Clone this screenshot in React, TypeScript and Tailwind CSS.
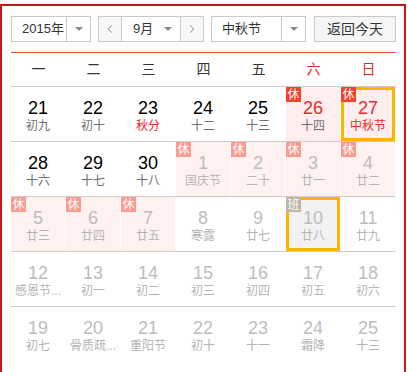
import { ChevronLeft, ChevronRight } from 'lucide-react';

type Day = {
  d: number;
  lunar: string;
  other?: boolean;   // next month, faded
  rest?: boolean;    // 休
  work?: boolean;    // 班
  red?: boolean;
  lunarRed?: boolean;
  selected?: boolean;
};

const weekdays = ['一', '二', '三', '四', '五', '六', '日'];

const rows: Day[][] = [
  [
    { d: 21, lunar: '初九' },
    { d: 22, lunar: '初十' },
    { d: 23, lunar: '秋分', lunarRed: true },
    { d: 24, lunar: '十二' },
    { d: 25, lunar: '十三' },
    { d: 26, lunar: '十四', rest: true, red: true },
    { d: 27, lunar: '中秋节', rest: true, red: true, lunarRed: true, selected: true },
  ],
  [
    { d: 28, lunar: '十六' },
    { d: 29, lunar: '十七' },
    { d: 30, lunar: '十八' },
    { d: 1, lunar: '国庆节', other: true, rest: true },
    { d: 2, lunar: '二十', other: true, rest: true },
    { d: 3, lunar: '廿一', other: true, rest: true },
    { d: 4, lunar: '廿二', other: true, rest: true },
  ],
  [
    { d: 5, lunar: '廿三', other: true, rest: true },
    { d: 6, lunar: '廿四', other: true, rest: true },
    { d: 7, lunar: '廿五', other: true, rest: true },
    { d: 8, lunar: '寒露', other: true },
    { d: 9, lunar: '廿七', other: true },
    { d: 10, lunar: '廿八', other: true, work: true },
    { d: 11, lunar: '廿九', other: true },
  ],
  [
    { d: 12, lunar: '感恩节...', other: true },
    { d: 13, lunar: '初一', other: true },
    { d: 14, lunar: '初二', other: true },
    { d: 15, lunar: '初三', other: true },
    { d: 16, lunar: '初四', other: true },
    { d: 17, lunar: '初五', other: true },
    { d: 18, lunar: '初六', other: true },
  ],
  [
    { d: 19, lunar: '初七', other: true },
    { d: 20, lunar: '骨质疏...', other: true },
    { d: 21, lunar: '重阳节', other: true },
    { d: 22, lunar: '初十', other: true },
    { d: 23, lunar: '十一', other: true },
    { d: 24, lunar: '霜降', other: true },
    { d: 25, lunar: '十三', other: true },
  ],
];

function Caret() {
  return <span className="w-0 h-0 border-x-[4px] border-x-transparent border-t-[4px] border-t-[#8a8a8a]" />;
}

function Cell({ day }: { day: Day }) {
  const boxed = day.selected || day.work;
  const bg = day.work ? 'bg-[#f2f2f2]' : day.rest ? (day.other ? 'bg-[#fff1f0]' : 'bg-[#ffeeee]') : '';
  const numColor = day.other ? 'text-[#bdbdbd]' : day.red ? 'text-[#e42a2a]' : 'text-black';
  const lunarColor = day.other ? 'text-[#b5b5b5]' : day.lunarRed ? 'text-[#e42a2a]' : 'text-[#6e6e6e]';

  return (
    <div
      className={`relative mr-px h-[54px] flex flex-col items-center ${bg} ${
        boxed ? 'border-[3px] border-[#ffb500] pt-[8px]' : 'pt-[11px]'
      }`}
    >
      {day.rest && (
        <span
          className={`absolute ${boxed ? '-left-[3px] -top-[3px]' : 'left-0 top-0'} w-[15px] h-[15px] flex items-center justify-center text-[12px] leading-none text-white ${
            day.other ? 'bg-[#fa9b92]' : 'bg-[#f5402f]'
          }`}
        >
          休
        </span>
      )}
      {day.work && (
        <span className="absolute -left-[3px] -top-[3px] w-[15px] h-[15px] flex items-center justify-center text-[12px] leading-none text-white bg-[#bdb5a6]">
          班
        </span>
      )}
      <span className={`text-[18px] leading-[20px] ${numColor}`}>{day.d}</span>
      <span className={`text-[12px] leading-[16px] whitespace-nowrap ${lunarColor}`}>{day.lunar}</span>
    </div>
  );
}

export default function App() {
  return (
    <div className="bg-white pt-[4px] font-['Liberation_Sans','Noto_Sans_CJK_SC',sans-serif]">
      <div className="w-[406px] min-h-[368px] border-2 border-b-0 border-[#c8161d] pt-[10px] pl-[9px] pr-[8px]">
        {/* Controls */}
        <div className="flex h-[26px] text-[13px] text-[#333] whitespace-nowrap">
          <div className="w-[80px] flex border border-[#c9c9c9]">
            <span className="flex-1 flex items-center pl-[10px]">2015年</span>
            <span className="w-[24px] flex items-center justify-center border-l border-[#c9c9c9]">
              <Caret />
            </span>
          </div>

          <div className="w-[106px] ml-[7px] flex border border-[#c9c9c9]">
            <span className="w-[23px] flex items-center justify-center bg-[#f7f7f7] border-r border-[#c9c9c9] text-[#666]">
              <ChevronLeft size={14} strokeWidth={1.3} />
            </span>
            <span className="flex-1 flex items-center pl-[11px]">
              9月
              <span className="ml-auto mr-[8px] flex">
                <Caret />
              </span>
            </span>
            <span className="w-[23px] flex items-center justify-center bg-[#f7f7f7] border-l border-[#c9c9c9] text-[#666]">
              <ChevronRight size={14} strokeWidth={1.3} />
            </span>
          </div>

          <div className="w-[95px] ml-[7px] flex border border-[#c9c9c9]">
            <span className="flex-1 flex items-center pl-[10px]">中秋节</span>
            <span className="w-[24px] flex items-center justify-center border-l border-[#c9c9c9]">
              <Caret />
            </span>
          </div>

          <button className="w-[82px] ml-auto flex items-center justify-center border border-[#c9c9c9] bg-[#f5f5f5] text-[14px]">
            返回今天
          </button>
        </div>

        {/* Weekday header */}
        <div className="mt-[10px] grid grid-cols-7 h-[34px] items-center border-t border-[#f24b3a] text-[14px]">
          {weekdays.map((w, i) => (
            <span key={w} className={`text-center ${i >= 5 ? 'text-[#e42a2a]' : 'text-[#333]'}`}>
              {w}
            </span>
          ))}
        </div>

        {/* Days */}
        {rows.map((row, r) => (
          <div key={r} className="grid grid-cols-7 border-t border-[#cccccc]">
            {row.map((day, i) => (
              <Cell key={i} day={day} />
            ))}
          </div>
        ))}
      </div>
    </div>
  );
}
